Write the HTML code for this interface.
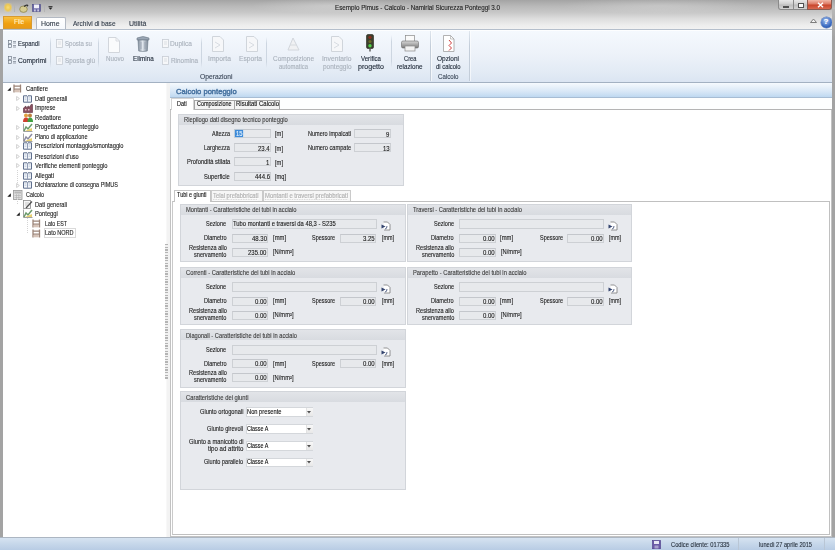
<!DOCTYPE html>
<html><head><meta charset="utf-8"><style>
html,body{margin:0;padding:0;width:835px;height:550px;overflow:hidden;background:#fff;font-family:"Liberation Sans", sans-serif;}
#w{position:absolute;left:0;top:0;width:835px;height:550px;overflow:hidden;}
.r{position:absolute;}
.t{position:absolute;white-space:nowrap;transform-origin:0 50%;-webkit-text-stroke:0.12px currentColor;}
</style></head><body><div id="w">
<div class="r" style="left:0px;top:0px;width:835px;height:29px;background:linear-gradient(#a4a4a4 0px,#b8b8b8 6px,#c9c9c9 13px,#dedede 19px,#ededed 25px,#f2f2f2 29px)"></div>
<div class="r" style="left:250px;top:0px;width:160px;height:14px;background:radial-gradient(ellipse at 50% 40%,rgba(255,255,255,0.25),rgba(255,255,255,0) 70%)"></div>
<div class="r" style="left:560px;top:0px;width:200px;height:14px;background:radial-gradient(ellipse at 50% 40%,rgba(255,255,255,0.2),rgba(255,255,255,0) 70%)"></div>
<div class="t" style="left:335.00px;top:3.80px;font-size:6.5px;line-height:7.80px;color:#1e1e1e;transform:scale(0.966,1);">Esempio Pimus - Calcolo - Namirial Sicurezza Ponteggi 3.0</div>
<div class="r" style="left:778px;top:0px;width:16px;height:10px;background:linear-gradient(#e8e8e8,#cfcfcf 45%,#bdbdbd 55%,#d4d4d4);border:1px solid #8a8a8a;border-top:none;box-sizing:border-box;border-radius:0 0 0 3px"></div>
<div class="r" style="left:793px;top:0px;width:15px;height:10px;background:linear-gradient(#e8e8e8,#cfcfcf 45%,#bdbdbd 55%,#d4d4d4);border:1px solid #8a8a8a;border-top:none;box-sizing:border-box"></div>
<div class="r" style="left:807px;top:0px;width:25px;height:10px;background:linear-gradient(#f0b8a8,#dc7a64 45%,#c8452c 55%,#d86a50);border:1px solid #8a5a50;border-top:none;box-sizing:border-box;border-radius:0 0 3px 0"></div>
<svg class="r" style="left:816.5px;top:2px" width="7" height="6" viewBox="0 0 7 6"><path d="M1 0.8 L6 5.2 M6 0.8 L1 5.2" stroke="#fff" stroke-width="1.4"/></svg>
<div class="r" style="left:782.5px;top:5.5px;width:6px;height:2px;background:#fff;border:0.6px solid #505050;box-sizing:border-box"></div>
<div class="r" style="left:797.5px;top:3px;width:6px;height:4.5px;border:1px solid #505050;background:#fafafa;box-sizing:border-box"></div>
<div class="r" style="left:3.5px;top:3px;width:8px;height:9px;background:radial-gradient(ellipse at 50% 50%,#f6dc78 0,#eec850 45%,rgba(240,210,120,0.25) 75%,rgba(240,210,120,0) 100%)"></div>
<div class="r" style="left:14px;top:5px;width:0.8px;height:7px;background:#b4b4b4"></div>
<svg class="r" style="left:18.5px;top:3.5px" width="10" height="9" viewBox="0 0 10 9"><ellipse cx="4.5" cy="5.2" rx="3.8" ry="3.2" fill="#d6cc90" stroke="#8c8450" stroke-width="0.8"/><path d="M5 2.5 Q7 0.5 9 1.5" fill="none" stroke="#303030" stroke-width="1.1"/><path d="M8 0.5 L9.5 1.8 L8 2.8 Z" fill="#303030"/></svg>
<svg class="r" style="left:32px;top:4px" width="9" height="8" viewBox="0 0 9 8"><rect x="0.5" y="0.5" width="8" height="7" fill="#6a68a6" stroke="#4c4a86" stroke-width="0.6"/><rect x="2" y="0.5" width="5" height="3.8" fill="#f0f0f8"/><rect x="2.2" y="5.4" width="1.4" height="2" fill="#e0e0ee"/><rect x="5.4" y="5.4" width="1.4" height="2" fill="#e0e0ee"/></svg>
<div class="r" style="left:44px;top:5px;width:0.8px;height:7px;background:#b4b4b4"></div>
<svg class="r" style="left:48px;top:5.5px" width="5" height="4" viewBox="0 0 5 4"><rect x="0.5" y="0" width="4" height="0.8" fill="#222"/><path d="M0.5 1.6 H4.5 L2.5 3.8 Z" fill="#222"/></svg>
<div class="r" style="left:3px;top:16px;width:29px;height:13px;background:linear-gradient(#f8c040,#f0a010 60%,#e89a18);border:1px solid #d89a30;box-sizing:border-box"></div>
<div class="t" style="left:14.00px;top:18.00px;font-size:7.0px;line-height:8.40px;color:#fff0c8;transform:scale(0.887,1);">File</div>
<div class="r" style="left:36px;top:16.5px;width:30px;height:13px;background:linear-gradient(#ffffff,#f5f8fc);border:1px solid #b3b9c3;border-bottom:none;box-sizing:border-box;border-radius:2px 2px 0 0"></div>
<div class="t" style="left:41.00px;top:19.80px;font-size:6.5px;line-height:7.80px;color:#353f4c;transform:scale(1.067,1);">Home</div>
<div class="t" style="left:73.00px;top:19.80px;font-size:6.5px;line-height:7.80px;color:#353f4c;transform:scale(1.006,1);">Archivi di base</div>
<div class="t" style="left:129.00px;top:19.80px;font-size:6.5px;line-height:7.80px;color:#353f4c;transform:scale(1.077,1);">Utilità</div>
<svg class="r" style="left:809px;top:17px" width="9" height="7" viewBox="0 0 9 7"><path d="M1.5 5.5 L4.5 2 L7.5 5.5 Z" fill="#f4f4f4" stroke="#707070" stroke-width="0.9"/></svg>
<div class="r" style="left:820.5px;top:16.5px;width:11px;height:11px;border-radius:50%;background:radial-gradient(circle at 45% 35%,#a8c4f0,#3a6ac0 60%,#2850a0);box-shadow:0 0 0 0.5px #5a7ab8"></div>
<div class="t" style="left:823.56px;top:16.90px;font-size:8px;line-height:9.60px;color:#fff;transform:scale(1.000,1);font-weight:bold;">?</div>
<div class="r" style="left:3px;top:29px;width:829px;height:54px;background:linear-gradient(#f5f9fe,#edf2f9 45%,#e3ebf5 80%,#dbe5f2);border-top:1px solid #b5bfcc;border-bottom:1px solid #a3b1c2;box-sizing:border-box"></div>
<div class="r" style="left:3px;top:30px;width:829px;height:1px;background:#fdfeff"></div>
<svg class="r" style="left:7.5px;top:39.5px" width="8" height="8" viewBox="0 0 8 8"><rect x="0.5" y="0.5" width="3" height="3" fill="none" stroke="#6a7482" stroke-width="0.65"/><rect x="0.5" y="4.5" width="3" height="3" fill="none" stroke="#6a7482" stroke-width="0.65"/><path d="M5 1.5 H8 M5 3 H8 M5 5.5 H8 M5 7 H8" stroke="#6a7482" stroke-width="0.65"/></svg>
<div class="t" style="left:17.50px;top:40.10px;font-size:7px;line-height:8.40px;color:#222c3a;transform:scale(0.850,1);">Espandi</div>
<svg class="r" style="left:7.5px;top:56px" width="8" height="8" viewBox="0 0 8 8"><rect x="0.5" y="0.5" width="3" height="3" fill="none" stroke="#6a7482" stroke-width="0.65"/><rect x="0.5" y="4.5" width="3" height="3" fill="none" stroke="#6a7482" stroke-width="0.65"/><path d="M5 1.5 H8 M5 3 H8 M5 5.5 H8 M5 7 H8" stroke="#6a7482" stroke-width="0.65"/></svg>
<div class="t" style="left:17.50px;top:56.90px;font-size:7px;line-height:8.40px;color:#222c3a;transform:scale(0.952,1);">Comprimi</div>
<div class="r" style="left:50px;top:37px;width:1px;height:31px;background:linear-gradient(rgba(200,210,222,0),#cdd6e1 20%,#cdd6e1 80%,rgba(200,210,222,0))"></div>
<svg class="r" style="left:55px;top:39px" width="8" height="9" viewBox="0 0 8 9"><rect x="1.5" y="0.5" width="6" height="8" fill="#f6f7f9" stroke="#c8cdd4" stroke-width="0.8"/><path d="M3 3 H6 M3 5 H6" stroke="#d0d4da" stroke-width="0.7"/></svg>
<div class="t" style="left:65.00px;top:40.10px;font-size:7px;line-height:8.40px;color:#a9b1bb;transform:scale(0.867,1);">Sposta su</div>
<svg class="r" style="left:55px;top:56px" width="8" height="9" viewBox="0 0 8 9"><rect x="1.5" y="0.5" width="6" height="8" fill="#f6f7f9" stroke="#c8cdd4" stroke-width="0.8"/><path d="M3 3 H6 M3 5 H6" stroke="#d0d4da" stroke-width="0.7"/></svg>
<div class="t" style="left:65.00px;top:56.90px;font-size:7px;line-height:8.40px;color:#a9b1bb;transform:scale(0.907,1);">Sposta giù</div>
<div class="r" style="left:98px;top:37px;width:1px;height:31px;background:linear-gradient(rgba(200,210,222,0),#cdd6e1 20%,#cdd6e1 80%,rgba(200,210,222,0))"></div>
<svg class="r" style="left:107px;top:37px" width="14" height="16" viewBox="0 0 14 16"><path d="M1.5 0.5 H9 L12.5 4 V15.5 H1.5 Z" fill="#fafbfc" stroke="#d2d6dc" stroke-width="1"/><path d="M9 0.5 V4 H12.5" fill="none" stroke="#d2d6dc" stroke-width="0.8"/></svg>
<div class="t" style="left:105.50px;top:55.10px;font-size:7px;line-height:8.40px;color:#a9b1bb;transform:scale(0.890,1);">Nuovo</div>
<svg class="r" style="left:136px;top:35px" width="14" height="17" viewBox="0 0 14 17"><path d="M1 3 Q7 0 13 3 V5 H1 Z" fill="#9aa6b4" stroke="#6c7886" stroke-width="0.6"/><path d="M2 5 H12 L11.3 16 Q7 17 2.7 16 Z" fill="url(#tg)" stroke="#6c7886" stroke-width="0.6"/><defs><linearGradient id="tg"><stop offset="0" stop-color="#7e8a98"/><stop offset="0.45" stop-color="#dfe5ec"/><stop offset="1" stop-color="#7a8694"/></linearGradient></defs><path d="M5 7 V14 M9 7 V14" stroke="#8a96a4" stroke-width="0.6"/></svg>
<div class="t" style="left:132.60px;top:55.10px;font-size:7px;line-height:8.40px;color:#222c3a;transform:scale(0.902,1);">Elimina</div>
<svg class="r" style="left:161px;top:39px" width="8" height="9" viewBox="0 0 8 9"><rect x="1.5" y="0.5" width="6" height="8" fill="#f6f7f9" stroke="#c8cdd4" stroke-width="0.8"/><path d="M3 3 H6 M3 5 H6" stroke="#d0d4da" stroke-width="0.7"/></svg>
<div class="t" style="left:170.00px;top:39.90px;font-size:7px;line-height:8.40px;color:#a9b1bb;transform:scale(0.942,1);">Duplica</div>
<svg class="r" style="left:161px;top:56px" width="8" height="9" viewBox="0 0 8 9"><rect x="1.5" y="0.5" width="6" height="8" fill="#f6f7f9" stroke="#c8cdd4" stroke-width="0.8"/><path d="M3 3 H6 M3 5 H6" stroke="#d0d4da" stroke-width="0.7"/></svg>
<div class="t" style="left:170.50px;top:56.90px;font-size:7px;line-height:8.40px;color:#a9b1bb;transform:scale(0.913,1);">Rinomina</div>
<div class="r" style="left:201px;top:37px;width:1px;height:31px;background:linear-gradient(rgba(200,210,222,0),#cdd6e1 20%,#cdd6e1 80%,rgba(200,210,222,0))"></div>
<svg class="r" style="left:211px;top:36px" width="14" height="16" viewBox="0 0 14 16"><path d="M1.5 0.5 H9 L12.5 4 V15.5 H1.5 Z" fill="#f6f7f9" stroke="#d0d5db" stroke-width="1"/><path d="M4 6 L9 9 L4 12" fill="none" stroke="#d8dce2" stroke-width="1"/></svg>
<div class="t" style="left:208.00px;top:55.10px;font-size:7px;line-height:8.40px;color:#a9b1bb;transform:scale(0.969,1);">Importa</div>
<svg class="r" style="left:245px;top:36px" width="14" height="16" viewBox="0 0 14 16"><path d="M1.5 0.5 H9 L12.5 4 V15.5 H1.5 Z" fill="#f6f7f9" stroke="#d0d5db" stroke-width="1"/><path d="M4 6 L9 9 L4 12" fill="none" stroke="#d8dce2" stroke-width="1"/></svg>
<div class="t" style="left:239.00px;top:55.10px;font-size:7px;line-height:8.40px;color:#a9b1bb;transform:scale(0.953,1);">Esporta</div>
<div class="r" style="left:266px;top:37px;width:1px;height:31px;background:linear-gradient(rgba(200,210,222,0),#cdd6e1 20%,#cdd6e1 80%,rgba(200,210,222,0))"></div>
<svg class="r" style="left:286px;top:36px" width="15" height="16" viewBox="0 0 15 16"><path d="M2 14 L7 2 L13 14 Z" fill="#f0f1f3" stroke="#d2d6dc" stroke-width="1"/><path d="M4 9 H11" stroke="#d6dade" stroke-width="1"/></svg>
<div class="t" style="left:273.00px;top:55.10px;font-size:7px;line-height:8.40px;color:#a9b1bb;transform:scale(0.924,1);">Composizione</div>
<div class="t" style="left:279.00px;top:62.90px;font-size:7px;line-height:8.40px;color:#a9b1bb;transform:scale(0.847,1);">automatica</div>
<svg class="r" style="left:330px;top:36px" width="14" height="16" viewBox="0 0 14 16"><path d="M1.5 0.5 H9 L12.5 4 V15.5 H1.5 Z" fill="#f6f7f9" stroke="#d0d5db" stroke-width="1"/><path d="M4 6 L9 9 L4 12" fill="none" stroke="#d8dce2" stroke-width="1"/></svg>
<div class="t" style="left:322.00px;top:55.10px;font-size:7px;line-height:8.40px;color:#a9b1bb;transform:scale(0.960,1);">Inventario</div>
<div class="t" style="left:323.00px;top:62.90px;font-size:7px;line-height:8.40px;color:#a9b1bb;transform:scale(0.927,1);">ponteggio</div>
<svg class="r" style="left:365px;top:34px" width="10" height="18" viewBox="0 0 10 18"><rect x="1.5" y="0.5" width="7" height="14" rx="1.5" fill="#3c3f2e" stroke="#23251a" stroke-width="0.6"/><circle cx="5" cy="3.3" r="1.6" fill="#8a3020"/><circle cx="5" cy="7.5" r="1.6" fill="#6a6a28"/><circle cx="5" cy="11.7" r="1.7" fill="#50d048"/><rect x="4.3" y="14.5" width="1.4" height="3" fill="#555"/></svg>
<div class="t" style="left:361.00px;top:55.10px;font-size:7px;line-height:8.40px;color:#222c3a;transform:scale(0.871,1);">Verifica</div>
<div class="t" style="left:358.00px;top:62.90px;font-size:7px;line-height:8.40px;color:#222c3a;transform:scale(1.012,1);">progetto</div>
<div class="r" style="left:391px;top:35px;width:1px;height:33px;background:linear-gradient(rgba(200,210,222,0),#cdd6e1 20%,#cdd6e1 80%,rgba(200,210,222,0))"></div>
<svg class="r" style="left:401px;top:35px" width="18" height="17" viewBox="0 0 18 17"><rect x="4.5" y="0.5" width="9" height="6" fill="#fafafa" stroke="#8a8a8a" stroke-width="0.7"/><rect x="0.5" y="6" width="17" height="7" rx="1.5" fill="url(#pg)" stroke="#6a6a6a" stroke-width="0.6"/><defs><linearGradient id="pg" x1="0" y1="0" x2="0" y2="1"><stop offset="0" stop-color="#d8d8d8"/><stop offset="1" stop-color="#7a7a7a"/></linearGradient></defs><rect x="4" y="11" width="10" height="5" fill="#f2f2f2" stroke="#8a8a8a" stroke-width="0.7"/></svg>
<div class="t" style="left:404.00px;top:55.10px;font-size:7px;line-height:8.40px;color:#222c3a;transform:scale(0.824,1);">Crea</div>
<div class="t" style="left:397.00px;top:62.90px;font-size:7px;line-height:8.40px;color:#222c3a;transform:scale(0.898,1);">relazione</div>
<div class="t" style="left:200.00px;top:72.90px;font-size:7px;line-height:8.40px;color:#3b4758;transform:scale(0.960,1);">Operazioni</div>
<div class="r" style="left:430px;top:31px;width:1px;height:50px;background:linear-gradient(#dfe6ee,#c3cdd9 30%,#c3cdd9)"></div>
<div class="r" style="left:431px;top:31px;width:1px;height:50px;background:rgba(255,255,255,0.6)"></div>
<svg class="r" style="left:442px;top:35px" width="13" height="17" viewBox="0 0 13 17"><path d="M1.5 0.5 H8.5 L12 4 V16.5 H1.5 Z" fill="#fff" stroke="#a0a0a0" stroke-width="0.8"/><path d="M8.5 0.5 V4 H12" fill="none" stroke="#a0a0a0" stroke-width="0.6"/><path d="M7 5 L9.5 8 L7 10.5 L9.5 13 L7 15.5" fill="none" stroke="#d04040" stroke-width="1"/></svg>
<div class="t" style="left:437.00px;top:55.10px;font-size:7px;line-height:8.40px;color:#222c3a;transform:scale(0.927,1);">Opzioni</div>
<div class="t" style="left:436.00px;top:62.90px;font-size:7px;line-height:8.40px;color:#222c3a;transform:scale(0.840,1);">di calcolo</div>
<div class="t" style="left:438.00px;top:72.90px;font-size:7px;line-height:8.40px;color:#3b4758;transform:scale(0.878,1);">Calcolo</div>
<div class="r" style="left:469px;top:31px;width:1px;height:50px;background:linear-gradient(#dfe6ee,#c3cdd9 30%,#c3cdd9)"></div>
<div class="r" style="left:470px;top:31px;width:1px;height:50px;background:rgba(255,255,255,0.6)"></div>
<div class="r" style="left:0px;top:29px;width:2.5px;height:508px;background:#a3a3a3"></div>
<div class="r" style="left:832px;top:9px;width:3px;height:528px;background:linear-gradient(#b8b8b8,#a3a3a3 30px)"></div>
<div class="r" style="left:3px;top:83px;width:829px;height:453px;background:#fff"></div>
<div class="r" style="left:165.5px;top:83px;width:4px;height:454px;background:#f3f3f3"></div>
<div class="r" style="left:165.5px;top:83px;width:0.7px;height:454px;background:#f8f8f8"></div>
<div class="r" style="left:165.3px;top:244px;width:3.2px;height:135px;background:repeating-linear-gradient(#b4b4b4 0 0.8px,#f0f0f0 0.8px 1.6px)"></div>
<svg class="r" style="left:6.5px;top:87.3px" width="4" height="4" viewBox="0 0 4 4"><path d="M3.8 0.3 V3.8 H0.3 Z" fill="#1a1a1a"/></svg>
<svg class="r" style="left:13.3px;top:84.3px" width="9" height="9" viewBox="0 0 9 9"><path d="M1 0.5 V8.5 M7.5 0.5 V8.5 M1 2.2 H7.5 M1 5.2 H7.5" stroke="#9c8478" stroke-width="1.3" fill="none"/><rect x="1.8" y="5.9" width="5" height="2.4" fill="#d8c4b8"/></svg>
<div class="t" style="left:25.50px;top:85.00px;font-size:7.0px;line-height:8.40px;color:#1c1c1c;transform:scale(0.832,1);">Cantiere</div>
<svg class="r" style="left:16.400000000000002px;top:96.0px" width="4" height="5" viewBox="0 0 4 5"><path d="M0.6 0.5 L3.4 2.5 L0.6 4.5 Z" fill="#fff" stroke="#c0c0c0" stroke-width="0.7"/></svg>
<svg class="r" style="left:23.1px;top:94.5px" width="9" height="8" viewBox="0 0 9 8"><path d="M0.5 0.8 H4 L4.5 1.3 L5 0.8 H8.5 V7.2 H5 L4.5 7.7 L4 7.2 H0.5 Z" fill="#f2f5fa" stroke="#60708e" stroke-width="1"/><path d="M4.5 1.3 V7.2" stroke="#7888a6" stroke-width="0.8"/><path d="M1.6 2.8 H3.4 M1.6 4.3 H3.4 M5.6 2.8 H7.4 M5.6 4.3 H7.4" stroke="#aab8cc" stroke-width="0.6"/></svg>
<div class="t" style="left:35.00px;top:94.70px;font-size:7.0px;line-height:8.40px;color:#1c1c1c;transform:scale(0.824,1);">Dati generali</div>
<svg class="r" style="left:16.400000000000002px;top:105.5px" width="4" height="5" viewBox="0 0 4 5"><path d="M0.6 0.5 L3.4 2.5 L0.6 4.5 Z" fill="#fff" stroke="#c0c0c0" stroke-width="0.7"/></svg>
<svg class="r" style="left:22.8px;top:103.5px" width="10" height="9" viewBox="0 0 10 9"><path d="M0.5 8.5 V4 L3 2 V4 L5.5 2 V4 L8 1 V0.5 H9.5 V8.5 Z" fill="#8a5060" stroke="#5a3040" stroke-width="0.6"/><rect x="2" y="5" width="1.5" height="1.5" fill="#e0c0c8"/><rect x="5" y="5" width="1.5" height="1.5" fill="#e0c0c8"/></svg>
<div class="t" style="left:35.00px;top:104.20px;font-size:7.0px;line-height:8.40px;color:#1c1c1c;transform:scale(0.811,1);">Imprese</div>
<svg class="r" style="left:22.8px;top:113.0px" width="10" height="9" viewBox="0 0 10 9"><circle cx="3" cy="2.5" r="2" fill="#e0a040"/><circle cx="7" cy="2.5" r="2" fill="#c08040"/><path d="M0 9 Q0 4.5 3 4.5 Q6 4.5 6 9 Z" fill="#d04030"/><path d="M4.5 9 Q4.5 4.5 7 4.5 Q10 4.5 10 9 Z" fill="#40a040"/></svg>
<div class="t" style="left:35.00px;top:113.70px;font-size:7.0px;line-height:8.40px;color:#1c1c1c;transform:scale(0.846,1);">Redattore</div>
<svg class="r" style="left:16.400000000000002px;top:124.5px" width="4" height="5" viewBox="0 0 4 5"><path d="M0.6 0.5 L3.4 2.5 L0.6 4.5 Z" fill="#fff" stroke="#c0c0c0" stroke-width="0.7"/></svg>
<svg class="r" style="left:22.8px;top:122.5px" width="10" height="9" viewBox="0 0 10 9"><path d="M0.5 0.5 V8.5 H9.5" fill="none" stroke="#8a8a8a" stroke-width="0.8"/><path d="M1 8 L3 4 L5 6 L9 1" fill="none" stroke="#6a9a6a" stroke-width="1.5"/><path d="M2 8 L9 5 V8 Z" fill="#e8d070"/></svg>
<div class="t" style="left:35.00px;top:123.20px;font-size:7.0px;line-height:8.40px;color:#1c1c1c;transform:scale(0.837,1);">Progettazione ponteggio</div>
<svg class="r" style="left:16.400000000000002px;top:134.5px" width="4" height="5" viewBox="0 0 4 5"><path d="M0.6 0.5 L3.4 2.5 L0.6 4.5 Z" fill="#fff" stroke="#c0c0c0" stroke-width="0.7"/></svg>
<svg class="r" style="left:22.8px;top:132.5px" width="10" height="9" viewBox="0 0 10 9"><path d="M0.5 0.5 V8.5 H9.5" fill="none" stroke="#8a8a8a" stroke-width="0.8"/><path d="M1 8 L3 4 L5 6 L9 1" fill="none" stroke="#8a8aa0" stroke-width="1.5"/><path d="M2 8 L9 5 V8 Z" fill="#e8d070"/></svg>
<div class="t" style="left:35.00px;top:133.20px;font-size:7.0px;line-height:8.40px;color:#1c1c1c;transform:scale(0.794,1);">Piano di applicazione</div>
<svg class="r" style="left:16.400000000000002px;top:143.7px" width="4" height="5" viewBox="0 0 4 5"><path d="M0.6 0.5 L3.4 2.5 L0.6 4.5 Z" fill="#fff" stroke="#c0c0c0" stroke-width="0.7"/></svg>
<svg class="r" style="left:23.1px;top:142.2px" width="9" height="8" viewBox="0 0 9 8"><path d="M0.5 0.8 H4 L4.5 1.3 L5 0.8 H8.5 V7.2 H5 L4.5 7.7 L4 7.2 H0.5 Z" fill="#f2f5fa" stroke="#60708e" stroke-width="1"/><path d="M4.5 1.3 V7.2" stroke="#7888a6" stroke-width="0.8"/><path d="M1.6 2.8 H3.4 M1.6 4.3 H3.4 M5.6 2.8 H7.4 M5.6 4.3 H7.4" stroke="#aab8cc" stroke-width="0.6"/></svg>
<div class="t" style="left:35.00px;top:142.40px;font-size:7.0px;line-height:8.40px;color:#1c1c1c;transform:scale(0.812,1);">Prescrizioni montaggio/smontaggio</div>
<svg class="r" style="left:16.400000000000002px;top:153.8px" width="4" height="5" viewBox="0 0 4 5"><path d="M0.6 0.5 L3.4 2.5 L0.6 4.5 Z" fill="#fff" stroke="#c0c0c0" stroke-width="0.7"/></svg>
<svg class="r" style="left:23.1px;top:152.3px" width="9" height="8" viewBox="0 0 9 8"><path d="M0.5 0.8 H4 L4.5 1.3 L5 0.8 H8.5 V7.2 H5 L4.5 7.7 L4 7.2 H0.5 Z" fill="#f2f5fa" stroke="#60708e" stroke-width="1"/><path d="M4.5 1.3 V7.2" stroke="#7888a6" stroke-width="0.8"/><path d="M1.6 2.8 H3.4 M1.6 4.3 H3.4 M5.6 2.8 H7.4 M5.6 4.3 H7.4" stroke="#aab8cc" stroke-width="0.6"/></svg>
<div class="t" style="left:35.00px;top:152.50px;font-size:7.0px;line-height:8.40px;color:#1c1c1c;transform:scale(0.800,1);">Prescrizioni d'uso</div>
<svg class="r" style="left:16.400000000000002px;top:163.1px" width="4" height="5" viewBox="0 0 4 5"><path d="M0.6 0.5 L3.4 2.5 L0.6 4.5 Z" fill="#fff" stroke="#c0c0c0" stroke-width="0.7"/></svg>
<svg class="r" style="left:23.1px;top:161.6px" width="9" height="8" viewBox="0 0 9 8"><path d="M0.5 0.8 H4 L4.5 1.3 L5 0.8 H8.5 V7.2 H5 L4.5 7.7 L4 7.2 H0.5 Z" fill="#f2f5fa" stroke="#60708e" stroke-width="1"/><path d="M4.5 1.3 V7.2" stroke="#7888a6" stroke-width="0.8"/><path d="M1.6 2.8 H3.4 M1.6 4.3 H3.4 M5.6 2.8 H7.4 M5.6 4.3 H7.4" stroke="#aab8cc" stroke-width="0.6"/></svg>
<div class="t" style="left:35.00px;top:161.80px;font-size:7.0px;line-height:8.40px;color:#1c1c1c;transform:scale(0.824,1);">Verifiche elementi ponteggio</div>
<svg class="r" style="left:23.1px;top:171.5px" width="9" height="8" viewBox="0 0 9 8"><path d="M0.5 0.8 H4 L4.5 1.3 L5 0.8 H8.5 V7.2 H5 L4.5 7.7 L4 7.2 H0.5 Z" fill="#f2f5fa" stroke="#60708e" stroke-width="1"/><path d="M4.5 1.3 V7.2" stroke="#7888a6" stroke-width="0.8"/><path d="M1.6 2.8 H3.4 M1.6 4.3 H3.4 M5.6 2.8 H7.4 M5.6 4.3 H7.4" stroke="#aab8cc" stroke-width="0.6"/></svg>
<div class="t" style="left:35.00px;top:171.70px;font-size:7.0px;line-height:8.40px;color:#1c1c1c;transform:scale(0.828,1);">Allegati</div>
<svg class="r" style="left:16.400000000000002px;top:182.5px" width="4" height="5" viewBox="0 0 4 5"><path d="M0.6 0.5 L3.4 2.5 L0.6 4.5 Z" fill="#fff" stroke="#c0c0c0" stroke-width="0.7"/></svg>
<svg class="r" style="left:23.1px;top:181.0px" width="9" height="8" viewBox="0 0 9 8"><path d="M0.5 0.8 H4 L4.5 1.3 L5 0.8 H8.5 V7.2 H5 L4.5 7.7 L4 7.2 H0.5 Z" fill="#f2f5fa" stroke="#60708e" stroke-width="1"/><path d="M4.5 1.3 V7.2" stroke="#7888a6" stroke-width="0.8"/><path d="M1.6 2.8 H3.4 M1.6 4.3 H3.4 M5.6 2.8 H7.4 M5.6 4.3 H7.4" stroke="#aab8cc" stroke-width="0.6"/></svg>
<div class="t" style="left:35.00px;top:181.20px;font-size:7.0px;line-height:8.40px;color:#1c1c1c;transform:scale(0.781,1);">Dichiarazione di consegna PIMUS</div>
<svg class="r" style="left:6.5px;top:193.3px" width="4" height="4" viewBox="0 0 4 4"><path d="M3.8 0.3 V3.8 H0.3 Z" fill="#1a1a1a"/></svg>
<svg class="r" style="left:13.3px;top:190.3px" width="10" height="10" viewBox="0 0 10 10"><rect x="0.5" y="0.5" width="8.5" height="9" fill="#e0e0e0" stroke="#9a9a9a" stroke-width="0.8"/><rect x="1.5" y="1.5" width="6.5" height="2" fill="#b8b8b8"/><path d="M1.5 5.5 H8 M1.5 7.5 H8 M3.5 4 V9 M5.8 4 V9" stroke="#b0b0b0" stroke-width="0.6"/></svg>
<div class="t" style="left:25.50px;top:191.00px;font-size:7.0px;line-height:8.40px;color:#1c1c1c;transform:scale(0.775,1);">Calcolo</div>
<svg class="r" style="left:22.8px;top:200.0px" width="10" height="9" viewBox="0 0 10 9"><rect x="0.5" y="0.5" width="7" height="8" fill="#f8f8f8" stroke="#8a8a8a" stroke-width="0.8"/><path d="M2 3 H6 M2 5 H5" stroke="#aaa" stroke-width="0.6"/><path d="M3 8 L9 1.5" stroke="#505050" stroke-width="1.2"/></svg>
<div class="t" style="left:35.00px;top:200.70px;font-size:7.0px;line-height:8.40px;color:#1c1c1c;transform:scale(0.814,1);">Dati generali</div>
<svg class="r" style="left:16.1px;top:212.2px" width="4" height="4" viewBox="0 0 4 4"><path d="M3.8 0.3 V3.8 H0.3 Z" fill="#1a1a1a"/></svg>
<svg class="r" style="left:22.8px;top:209.2px" width="10" height="9" viewBox="0 0 10 9"><path d="M0.5 0.5 V8.5 H9.5" fill="none" stroke="#8a8a8a" stroke-width="0.8"/><path d="M1 8 L3 4 L5 6 L9 1" fill="none" stroke="#6a9a6a" stroke-width="1.5"/><path d="M2 8 L9 5 V8 Z" fill="#e8d070"/></svg>
<div class="t" style="left:35.00px;top:209.90px;font-size:7.0px;line-height:8.40px;color:#1c1c1c;transform:scale(0.825,1);">Ponteggi</div>
<svg class="r" style="left:32.3px;top:219.0px" width="9" height="9" viewBox="0 0 9 9"><path d="M1 0.5 V8.5 M7.5 0.5 V8.5 M1 2.2 H7.5 M1 5.2 H7.5" stroke="#9c8478" stroke-width="1.3" fill="none"/><rect x="1.8" y="5.9" width="5" height="2.4" fill="#d8c4b8"/></svg>
<div class="t" style="left:44.50px;top:219.70px;font-size:7.0px;line-height:8.40px;color:#1c1c1c;transform:scale(0.754,1);">Lato EST</div>
<svg class="r" style="left:32.3px;top:228.5px" width="9" height="9" viewBox="0 0 9 9"><path d="M1 0.5 V8.5 M7.5 0.5 V8.5 M1 2.2 H7.5 M1 5.2 H7.5" stroke="#9c8478" stroke-width="1.3" fill="none"/><rect x="1.8" y="5.9" width="5" height="2.4" fill="#d8c4b8"/></svg>
<div class="t" style="left:44.50px;top:229.20px;font-size:7.0px;line-height:8.40px;color:#1c1c1c;transform:scale(0.788,1);">Lato NORD</div>
<div class="r" style="left:17px;top:170px;width:1px;height:15px;background:repeating-linear-gradient(#d4d4d4 0 1px,transparent 1px 2px)"></div>
<div class="r" style="left:17px;top:199px;width:1px;height:6px;background:repeating-linear-gradient(#d4d4d4 0 1px,transparent 1px 2px)"></div>
<div class="r" style="left:27px;top:218px;width:1px;height:15px;background:repeating-linear-gradient(#d4d4d4 0 1px,transparent 1px 2px)"></div>
<div class="r" style="left:43.5px;top:228px;width:32px;height:10px;border:1px solid #dadada;box-sizing:border-box"></div>
<div class="r" style="left:170px;top:83px;width:662px;height:14.5px;background:linear-gradient(#f6fafe 0px,#e8f1fa 4px,#d6e6f6 9px,#bcd7f0 14.5px)"></div>
<div class="r" style="left:170px;top:97px;width:662px;height:1px;background:#a7bdd4"></div>
<div class="t" style="left:176.20px;top:87.14px;font-size:7.6px;line-height:9.12px;color:#4672a0;transform:scale(0.999,1);-webkit-text-stroke:0.45px #4672a0;">Calcolo ponteggio</div>
<div class="r" style="left:170px;top:98px;width:662px;height:11px;background:#fdfefe"></div>
<div class="r" style="left:194px;top:100px;width:40.5px;height:9px;background:#f4f4f4;border:1px solid #a4a4a4;border-bottom:none;box-sizing:border-box"></div>
<div class="r" style="left:233.5px;top:100px;width:46.5px;height:9px;background:#f4f4f4;border:1px solid #a4a4a4;border-bottom:none;box-sizing:border-box"></div>
<div class="r" style="left:169.5px;top:108.5px;width:662.5px;height:428.5px;border:1px solid #c2c2c2;box-sizing:border-box;background:#fff"></div>
<div class="r" style="left:169.5px;top:108.5px;width:662.5px;height:1px;background:#b4b4b4"></div>
<div class="r" style="left:170.5px;top:98px;width:23.5px;height:11.5px;background:#fff;border:1px solid #d4d4d4;border-bottom:none;box-sizing:border-box"></div>
<div class="t" style="left:176.80px;top:99.70px;font-size:7.0px;line-height:8.40px;color:#111;transform:scale(0.779,1);">Dati</div>
<div class="t" style="left:196.50px;top:100.00px;font-size:7.0px;line-height:8.40px;color:#111;transform:scale(0.778,1);">Composizione</div>
<div class="t" style="left:236.00px;top:100.00px;font-size:7.0px;line-height:8.40px;color:#111;transform:scale(0.857,1);">Risultati Calcolo</div>
<div class="r" style="left:178px;top:114px;width:226px;height:72px;background:#e8eaee;border:1px solid #d2d5da;box-sizing:border-box"></div>
<div class="r" style="left:179px;top:115px;width:224px;height:10px;background:linear-gradient(#e2e4e8,#d8dbe0)"></div>
<div class="t" style="left:184.00px;top:116.30px;font-size:7.0px;line-height:8.40px;color:#3c3c3c;transform:scale(0.825,1);">Riepilogo dati disegno tecnico ponteggio</div>
<div class="t" style="left:212.00px;top:129.90px;font-size:7.0px;line-height:8.40px;color:#1c1c1c;transform:scale(0.784,1);">Altezza</div>
<div class="r" style="left:234px;top:129.0px;width:37px;height:9px;background:#e7e9ec;border:1px solid #cdd0d4;border-top-color:#c4c7cc;box-sizing:border-box"></div>
<div class="t" style="left:275.00px;top:130.30px;font-size:7.0px;line-height:8.40px;color:#1c1c1c;transform:scale(0.823,1);">[m]</div>
<div class="t" style="left:204.30px;top:144.10px;font-size:7.0px;line-height:8.40px;color:#1c1c1c;transform:scale(0.786,1);">Larghezza</div>
<div class="r" style="left:234px;top:143.2px;width:37px;height:9px;background:#e7e9ec;border:1px solid #cdd0d4;border-top-color:#c4c7cc;box-sizing:border-box"></div>
<div class="t" style="left:258.12px;top:145.00px;font-size:7.0px;line-height:8.40px;color:#1a1a1a;transform:scale(0.857,1);">23.4</div>
<div class="t" style="left:275.00px;top:144.50px;font-size:7.0px;line-height:8.40px;color:#1c1c1c;transform:scale(0.823,1);">[m]</div>
<div class="t" style="left:186.70px;top:158.30px;font-size:7.0px;line-height:8.40px;color:#1c1c1c;transform:scale(0.830,1);">Profondità stilata</div>
<div class="r" style="left:234px;top:157.4px;width:37px;height:9px;background:#e7e9ec;border:1px solid #cdd0d4;border-top-color:#c4c7cc;box-sizing:border-box"></div>
<div class="t" style="left:266.46px;top:159.20px;font-size:7.0px;line-height:8.40px;color:#1a1a1a;transform:scale(0.857,1);">1</div>
<div class="t" style="left:275.00px;top:158.70px;font-size:7.0px;line-height:8.40px;color:#1c1c1c;transform:scale(0.823,1);">[m]</div>
<div class="t" style="left:204.30px;top:172.50px;font-size:7.0px;line-height:8.40px;color:#1c1c1c;transform:scale(0.826,1);">Superficie</div>
<div class="r" style="left:234px;top:171.6px;width:37px;height:9px;background:#e7e9ec;border:1px solid #cdd0d4;border-top-color:#c4c7cc;box-sizing:border-box"></div>
<div class="t" style="left:254.79px;top:173.40px;font-size:7.0px;line-height:8.40px;color:#1a1a1a;transform:scale(0.857,1);">444.6</div>
<div class="t" style="left:275.00px;top:172.90px;font-size:7.0px;line-height:8.40px;color:#1c1c1c;transform:scale(0.808,1);">[mq]</div>
<div class="r" style="left:234.8px;top:130.2px;width:8px;height:6.8px;background:#3c8ad8;box-shadow:0 0 1.5px #8cc0f0"></div>
<div class="t" style="left:235.50px;top:129.50px;font-size:7.0px;line-height:8.40px;color:#e8f4ff;transform:scale(0.835,1);">15</div>
<div class="t" style="left:307.70px;top:130.40px;font-size:7.0px;line-height:8.40px;color:#1c1c1c;transform:scale(0.791,1);">Numero impalcati</div>
<div class="r" style="left:354px;top:129px;width:37px;height:9px;background:#e7e9ec;border:1px solid #cdd0d4;border-top-color:#c4c7cc;box-sizing:border-box"></div>
<div class="t" style="left:386.46px;top:130.80px;font-size:7.0px;line-height:8.40px;color:#1a1a1a;transform:scale(0.857,1);">9</div>
<div class="t" style="left:307.70px;top:144.30px;font-size:7.0px;line-height:8.40px;color:#1c1c1c;transform:scale(0.803,1);">Numero campate</div>
<div class="r" style="left:354px;top:143px;width:37px;height:9px;background:#e7e9ec;border:1px solid #cdd0d4;border-top-color:#c4c7cc;box-sizing:border-box"></div>
<div class="t" style="left:383.13px;top:144.80px;font-size:7.0px;line-height:8.40px;color:#1a1a1a;transform:scale(0.857,1);">13</div>
<div class="r" style="left:210.5px;top:190px;width:52px;height:10.5px;background:#f6f6f6;border:1px solid #cacaca;border-bottom:none;box-sizing:border-box"></div>
<div class="r" style="left:262.5px;top:190px;width:88px;height:10.5px;background:#f6f6f6;border:1px solid #cacaca;border-bottom:none;box-sizing:border-box"></div>
<div class="r" style="left:172px;top:200.5px;width:658px;height:334.5px;border:1px solid #c0c0c0;border-left-color:#cacaca;box-sizing:border-box"></div>
<div class="r" style="left:173.5px;top:189.5px;width:37px;height:12px;background:#fff;border:1px solid #c4c4c4;border-bottom:none;box-sizing:border-box"></div>
<div class="t" style="left:176.50px;top:191.20px;font-size:7.0px;line-height:8.40px;color:#111;transform:scale(0.779,1);">Tubi e giunti</div>
<div class="t" style="left:213.00px;top:191.50px;font-size:7.0px;line-height:8.40px;color:#b4b4b4;transform:scale(0.829,1);text-shadow:0.7px 0.7px 0 #fff;text-decoration:underline dotted #d0d0d0;">Telai prefabbricati</div>
<div class="t" style="left:265.00px;top:191.50px;font-size:7.0px;line-height:8.40px;color:#b4b4b4;transform:scale(0.847,1);text-shadow:0.7px 0.7px 0 #fff;text-decoration:underline dotted #d0d0d0;">Montanti e traversi prefabbricati</div>
<div class="r" style="left:179.5px;top:203.7px;width:226px;height:58.5px;background:#e8eaee;border:1px solid #d2d5da;box-sizing:border-box"></div>
<div class="r" style="left:180.5px;top:204.7px;width:224px;height:10px;background:linear-gradient(#e2e4e8,#d8dbe0)"></div>
<div class="t" style="left:185.50px;top:206.00px;font-size:7.0px;line-height:8.40px;color:#3c3c3c;transform:scale(0.826,1);">Montanti - Caratteristiche dei tubi in acciaio</div>
<div class="t" style="left:206.34px;top:220.20px;font-size:7.0px;line-height:8.40px;color:#1c1c1c;transform:scale(0.797,1);">Sezione</div>
<div class="r" style="left:231.5px;top:219.0px;width:145px;height:10.2px;background:#e7e9ec;border:1px solid #cdd0d4;box-sizing:border-box"></div>
<div class="t" style="left:233.10px;top:219.90px;font-size:7.0px;line-height:8.40px;color:#1a1a1a;transform:scale(0.834,1);">Tubo montanti e traversi da 48,3 - S235</div>
<svg class="r" style="left:380.5px;top:221.2px" width="10" height="10" viewBox="0 0 10 10"><path d="M2.5 1 H6.5 L9 3.5 V9 H3" fill="#fff" stroke="#7a7a7a" stroke-width="0.8"/><path d="M0.5 3.5 L4.5 5.5 L0.5 7.5 Z" fill="#34446e"/><path d="M6 5 Q6 8 4 8" fill="none" stroke="#34446e" stroke-width="0.8"/></svg>
<div class="t" style="left:203.87px;top:234.00px;font-size:7.0px;line-height:8.40px;color:#1c1c1c;transform:scale(0.797,1);">Diametro</div>
<div class="r" style="left:231.5px;top:233.7px;width:36.5px;height:9px;background:#e7e9ec;border:1px solid #cdd0d4;border-top-color:#c4c7cc;box-sizing:border-box"></div>
<div class="t" style="left:251.79px;top:234.70px;font-size:7.0px;line-height:8.40px;color:#1a1a1a;transform:scale(0.857,1);">48.30</div>
<div class="t" style="left:272.50px;top:234.40px;font-size:7.0px;line-height:8.40px;color:#1c1c1c;transform:scale(0.836,1);">[mm]</div>
<div class="t" style="left:312.23px;top:234.00px;font-size:7.0px;line-height:8.40px;color:#1c1c1c;transform:scale(0.780,1);">Spessore</div>
<div class="r" style="left:339.5px;top:233.7px;width:36.5px;height:9px;background:#e7e9ec;border:1px solid #cdd0d4;border-top-color:#c4c7cc;box-sizing:border-box"></div>
<div class="t" style="left:363.12px;top:234.70px;font-size:7.0px;line-height:8.40px;color:#1a1a1a;transform:scale(0.857,1);">3.25</div>
<div class="t" style="left:381.50px;top:234.40px;font-size:7.0px;line-height:8.40px;color:#1c1c1c;transform:scale(0.772,1);">[mm]</div>
<div class="t" style="left:188.66px;top:243.80px;font-size:7.0px;line-height:8.40px;color:#1c1c1c;transform:scale(0.797,1);">Resistenza allo</div>
<div class="t" style="left:194.25px;top:250.80px;font-size:7.0px;line-height:8.40px;color:#1c1c1c;transform:scale(0.797,1);">snervamento</div>
<div class="r" style="left:231.5px;top:247.5px;width:36.5px;height:9px;background:#e7e9ec;border:1px solid #cdd0d4;border-top-color:#c4c7cc;box-sizing:border-box"></div>
<div class="t" style="left:248.45px;top:248.50px;font-size:7.0px;line-height:8.40px;color:#1a1a1a;transform:scale(0.857,1);">235.00</div>
<div class="t" style="left:273.00px;top:248.20px;font-size:7.0px;line-height:8.40px;color:#1c1c1c;transform:scale(0.824,1);">[N/mm²]</div>
<div class="r" style="left:407px;top:203.7px;width:225px;height:58.5px;background:#e8eaee;border:1px solid #d2d5da;box-sizing:border-box"></div>
<div class="r" style="left:408px;top:204.7px;width:223px;height:10px;background:linear-gradient(#e2e4e8,#d8dbe0)"></div>
<div class="t" style="left:413.00px;top:206.00px;font-size:7.0px;line-height:8.40px;color:#3c3c3c;transform:scale(0.826,1);">Traversi - Caratteristiche dei tubi in acciaio</div>
<div class="t" style="left:433.84px;top:220.20px;font-size:7.0px;line-height:8.40px;color:#1c1c1c;transform:scale(0.797,1);">Sezione</div>
<div class="r" style="left:459px;top:219.0px;width:145px;height:10.2px;background:#e7e9ec;border:1px solid #cdd0d4;box-sizing:border-box"></div>
<svg class="r" style="left:608px;top:221.2px" width="10" height="10" viewBox="0 0 10 10"><path d="M2.5 1 H6.5 L9 3.5 V9 H3" fill="#fff" stroke="#7a7a7a" stroke-width="0.8"/><path d="M0.5 3.5 L4.5 5.5 L0.5 7.5 Z" fill="#34446e"/><path d="M6 5 Q6 8 4 8" fill="none" stroke="#34446e" stroke-width="0.8"/></svg>
<div class="t" style="left:431.37px;top:234.00px;font-size:7.0px;line-height:8.40px;color:#1c1c1c;transform:scale(0.797,1);">Diametro</div>
<div class="r" style="left:459px;top:233.7px;width:36.5px;height:9px;background:#e7e9ec;border:1px solid #cdd0d4;border-top-color:#c4c7cc;box-sizing:border-box"></div>
<div class="t" style="left:482.62px;top:234.70px;font-size:7.0px;line-height:8.40px;color:#1a1a1a;transform:scale(0.857,1);">0.00</div>
<div class="t" style="left:500.00px;top:234.40px;font-size:7.0px;line-height:8.40px;color:#1c1c1c;transform:scale(0.836,1);">[mm]</div>
<div class="t" style="left:539.73px;top:234.00px;font-size:7.0px;line-height:8.40px;color:#1c1c1c;transform:scale(0.780,1);">Spessore</div>
<div class="r" style="left:567px;top:233.7px;width:36.5px;height:9px;background:#e7e9ec;border:1px solid #cdd0d4;border-top-color:#c4c7cc;box-sizing:border-box"></div>
<div class="t" style="left:590.62px;top:234.70px;font-size:7.0px;line-height:8.40px;color:#1a1a1a;transform:scale(0.857,1);">0.00</div>
<div class="t" style="left:609.00px;top:234.40px;font-size:7.0px;line-height:8.40px;color:#1c1c1c;transform:scale(0.772,1);">[mm]</div>
<div class="t" style="left:416.16px;top:243.80px;font-size:7.0px;line-height:8.40px;color:#1c1c1c;transform:scale(0.797,1);">Resistenza allo</div>
<div class="t" style="left:421.75px;top:250.80px;font-size:7.0px;line-height:8.40px;color:#1c1c1c;transform:scale(0.797,1);">snervamento</div>
<div class="r" style="left:459px;top:247.5px;width:36.5px;height:9px;background:#e7e9ec;border:1px solid #cdd0d4;border-top-color:#c4c7cc;box-sizing:border-box"></div>
<div class="t" style="left:482.62px;top:248.50px;font-size:7.0px;line-height:8.40px;color:#1a1a1a;transform:scale(0.857,1);">0.00</div>
<div class="t" style="left:500.50px;top:248.20px;font-size:7.0px;line-height:8.40px;color:#1c1c1c;transform:scale(0.824,1);">[N/mm²]</div>
<div class="r" style="left:179.5px;top:266.7px;width:226px;height:58.5px;background:#e8eaee;border:1px solid #d2d5da;box-sizing:border-box"></div>
<div class="r" style="left:180.5px;top:267.7px;width:224px;height:10px;background:linear-gradient(#e2e4e8,#d8dbe0)"></div>
<div class="t" style="left:185.50px;top:269.00px;font-size:7.0px;line-height:8.40px;color:#3c3c3c;transform:scale(0.829,1);">Correnti - Caratteristiche dei tubi in acciaio</div>
<div class="t" style="left:206.34px;top:283.20px;font-size:7.0px;line-height:8.40px;color:#1c1c1c;transform:scale(0.797,1);">Sezione</div>
<div class="r" style="left:231.5px;top:282.0px;width:145px;height:10.2px;background:#e7e9ec;border:1px solid #cdd0d4;box-sizing:border-box"></div>
<svg class="r" style="left:380.5px;top:284.2px" width="10" height="10" viewBox="0 0 10 10"><path d="M2.5 1 H6.5 L9 3.5 V9 H3" fill="#fff" stroke="#7a7a7a" stroke-width="0.8"/><path d="M0.5 3.5 L4.5 5.5 L0.5 7.5 Z" fill="#34446e"/><path d="M6 5 Q6 8 4 8" fill="none" stroke="#34446e" stroke-width="0.8"/></svg>
<div class="t" style="left:203.87px;top:297.00px;font-size:7.0px;line-height:8.40px;color:#1c1c1c;transform:scale(0.797,1);">Diametro</div>
<div class="r" style="left:231.5px;top:296.7px;width:36.5px;height:9px;background:#e7e9ec;border:1px solid #cdd0d4;border-top-color:#c4c7cc;box-sizing:border-box"></div>
<div class="t" style="left:255.12px;top:297.70px;font-size:7.0px;line-height:8.40px;color:#1a1a1a;transform:scale(0.857,1);">0.00</div>
<div class="t" style="left:272.50px;top:297.40px;font-size:7.0px;line-height:8.40px;color:#1c1c1c;transform:scale(0.836,1);">[mm]</div>
<div class="t" style="left:312.23px;top:297.00px;font-size:7.0px;line-height:8.40px;color:#1c1c1c;transform:scale(0.780,1);">Spessore</div>
<div class="r" style="left:339.5px;top:296.7px;width:36.5px;height:9px;background:#e7e9ec;border:1px solid #cdd0d4;border-top-color:#c4c7cc;box-sizing:border-box"></div>
<div class="t" style="left:363.12px;top:297.70px;font-size:7.0px;line-height:8.40px;color:#1a1a1a;transform:scale(0.857,1);">0.00</div>
<div class="t" style="left:381.50px;top:297.40px;font-size:7.0px;line-height:8.40px;color:#1c1c1c;transform:scale(0.772,1);">[mm]</div>
<div class="t" style="left:188.66px;top:306.80px;font-size:7.0px;line-height:8.40px;color:#1c1c1c;transform:scale(0.797,1);">Resistenza allo</div>
<div class="t" style="left:194.25px;top:313.80px;font-size:7.0px;line-height:8.40px;color:#1c1c1c;transform:scale(0.797,1);">snervamento</div>
<div class="r" style="left:231.5px;top:310.5px;width:36.5px;height:9px;background:#e7e9ec;border:1px solid #cdd0d4;border-top-color:#c4c7cc;box-sizing:border-box"></div>
<div class="t" style="left:255.12px;top:311.50px;font-size:7.0px;line-height:8.40px;color:#1a1a1a;transform:scale(0.857,1);">0.00</div>
<div class="t" style="left:273.00px;top:311.20px;font-size:7.0px;line-height:8.40px;color:#1c1c1c;transform:scale(0.824,1);">[N/mm²]</div>
<div class="r" style="left:407px;top:266.7px;width:225px;height:58.5px;background:#e8eaee;border:1px solid #d2d5da;box-sizing:border-box"></div>
<div class="r" style="left:408px;top:267.7px;width:223px;height:10px;background:linear-gradient(#e2e4e8,#d8dbe0)"></div>
<div class="t" style="left:413.00px;top:269.00px;font-size:7.0px;line-height:8.40px;color:#3c3c3c;transform:scale(0.826,1);">Parapetto - Caratteristiche dei tubi in acciaio</div>
<div class="t" style="left:433.84px;top:283.20px;font-size:7.0px;line-height:8.40px;color:#1c1c1c;transform:scale(0.797,1);">Sezione</div>
<div class="r" style="left:459px;top:282.0px;width:145px;height:10.2px;background:#e7e9ec;border:1px solid #cdd0d4;box-sizing:border-box"></div>
<svg class="r" style="left:608px;top:284.2px" width="10" height="10" viewBox="0 0 10 10"><path d="M2.5 1 H6.5 L9 3.5 V9 H3" fill="#fff" stroke="#7a7a7a" stroke-width="0.8"/><path d="M0.5 3.5 L4.5 5.5 L0.5 7.5 Z" fill="#34446e"/><path d="M6 5 Q6 8 4 8" fill="none" stroke="#34446e" stroke-width="0.8"/></svg>
<div class="t" style="left:431.37px;top:297.00px;font-size:7.0px;line-height:8.40px;color:#1c1c1c;transform:scale(0.797,1);">Diametro</div>
<div class="r" style="left:459px;top:296.7px;width:36.5px;height:9px;background:#e7e9ec;border:1px solid #cdd0d4;border-top-color:#c4c7cc;box-sizing:border-box"></div>
<div class="t" style="left:482.62px;top:297.70px;font-size:7.0px;line-height:8.40px;color:#1a1a1a;transform:scale(0.857,1);">0.00</div>
<div class="t" style="left:500.00px;top:297.40px;font-size:7.0px;line-height:8.40px;color:#1c1c1c;transform:scale(0.836,1);">[mm]</div>
<div class="t" style="left:539.73px;top:297.00px;font-size:7.0px;line-height:8.40px;color:#1c1c1c;transform:scale(0.780,1);">Spessore</div>
<div class="r" style="left:567px;top:296.7px;width:36.5px;height:9px;background:#e7e9ec;border:1px solid #cdd0d4;border-top-color:#c4c7cc;box-sizing:border-box"></div>
<div class="t" style="left:590.62px;top:297.70px;font-size:7.0px;line-height:8.40px;color:#1a1a1a;transform:scale(0.857,1);">0.00</div>
<div class="t" style="left:609.00px;top:297.40px;font-size:7.0px;line-height:8.40px;color:#1c1c1c;transform:scale(0.772,1);">[mm]</div>
<div class="t" style="left:416.16px;top:306.80px;font-size:7.0px;line-height:8.40px;color:#1c1c1c;transform:scale(0.797,1);">Resistenza allo</div>
<div class="t" style="left:421.75px;top:313.80px;font-size:7.0px;line-height:8.40px;color:#1c1c1c;transform:scale(0.797,1);">snervamento</div>
<div class="r" style="left:459px;top:310.5px;width:36.5px;height:9px;background:#e7e9ec;border:1px solid #cdd0d4;border-top-color:#c4c7cc;box-sizing:border-box"></div>
<div class="t" style="left:482.62px;top:311.50px;font-size:7.0px;line-height:8.40px;color:#1a1a1a;transform:scale(0.857,1);">0.00</div>
<div class="t" style="left:500.50px;top:311.20px;font-size:7.0px;line-height:8.40px;color:#1c1c1c;transform:scale(0.824,1);">[N/mm²]</div>
<div class="r" style="left:179.5px;top:329.3px;width:226px;height:58.5px;background:#e8eaee;border:1px solid #d2d5da;box-sizing:border-box"></div>
<div class="r" style="left:180.5px;top:330.3px;width:224px;height:10px;background:linear-gradient(#e2e4e8,#d8dbe0)"></div>
<div class="t" style="left:185.50px;top:331.60px;font-size:7.0px;line-height:8.40px;color:#3c3c3c;transform:scale(0.815,1);">Diagonali - Caratteristiche dei tubi in acciaio</div>
<div class="t" style="left:206.34px;top:345.80px;font-size:7.0px;line-height:8.40px;color:#1c1c1c;transform:scale(0.797,1);">Sezione</div>
<div class="r" style="left:231.5px;top:344.6px;width:145px;height:10.2px;background:#e7e9ec;border:1px solid #cdd0d4;box-sizing:border-box"></div>
<svg class="r" style="left:380.5px;top:346.8px" width="10" height="10" viewBox="0 0 10 10"><path d="M2.5 1 H6.5 L9 3.5 V9 H3" fill="#fff" stroke="#7a7a7a" stroke-width="0.8"/><path d="M0.5 3.5 L4.5 5.5 L0.5 7.5 Z" fill="#34446e"/><path d="M6 5 Q6 8 4 8" fill="none" stroke="#34446e" stroke-width="0.8"/></svg>
<div class="t" style="left:203.87px;top:359.60px;font-size:7.0px;line-height:8.40px;color:#1c1c1c;transform:scale(0.797,1);">Diametro</div>
<div class="r" style="left:231.5px;top:359.3px;width:36.5px;height:9px;background:#e7e9ec;border:1px solid #cdd0d4;border-top-color:#c4c7cc;box-sizing:border-box"></div>
<div class="t" style="left:255.12px;top:360.30px;font-size:7.0px;line-height:8.40px;color:#1a1a1a;transform:scale(0.857,1);">0.00</div>
<div class="t" style="left:272.50px;top:360.00px;font-size:7.0px;line-height:8.40px;color:#1c1c1c;transform:scale(0.836,1);">[mm]</div>
<div class="t" style="left:312.23px;top:359.60px;font-size:7.0px;line-height:8.40px;color:#1c1c1c;transform:scale(0.780,1);">Spessore</div>
<div class="r" style="left:339.5px;top:359.3px;width:36.5px;height:9px;background:#e7e9ec;border:1px solid #cdd0d4;border-top-color:#c4c7cc;box-sizing:border-box"></div>
<div class="t" style="left:363.12px;top:360.30px;font-size:7.0px;line-height:8.40px;color:#1a1a1a;transform:scale(0.857,1);">0.00</div>
<div class="t" style="left:381.50px;top:360.00px;font-size:7.0px;line-height:8.40px;color:#1c1c1c;transform:scale(0.772,1);">[mm]</div>
<div class="t" style="left:188.66px;top:369.40px;font-size:7.0px;line-height:8.40px;color:#1c1c1c;transform:scale(0.797,1);">Resistenza allo</div>
<div class="t" style="left:194.25px;top:376.40px;font-size:7.0px;line-height:8.40px;color:#1c1c1c;transform:scale(0.797,1);">snervamento</div>
<div class="r" style="left:231.5px;top:373.1px;width:36.5px;height:9px;background:#e7e9ec;border:1px solid #cdd0d4;border-top-color:#c4c7cc;box-sizing:border-box"></div>
<div class="t" style="left:255.12px;top:374.10px;font-size:7.0px;line-height:8.40px;color:#1a1a1a;transform:scale(0.857,1);">0.00</div>
<div class="t" style="left:273.00px;top:373.80px;font-size:7.0px;line-height:8.40px;color:#1c1c1c;transform:scale(0.824,1);">[N/mm²]</div>
<div class="r" style="left:179.5px;top:391.2px;width:226px;height:99px;background:#e8eaee;border:1px solid #d2d5da;box-sizing:border-box"></div>
<div class="r" style="left:180.5px;top:392.2px;width:224px;height:10px;background:linear-gradient(#e2e4e8,#d8dbe0)"></div>
<div class="t" style="left:185.50px;top:393.50px;font-size:7.0px;line-height:8.40px;color:#3c3c3c;transform:scale(0.832,1);">Caratteristiche dei giunti</div>
<div class="r" style="left:246.3px;top:407px;width:67px;height:9.6px;background:#fff;border:1px solid #d4d7db;box-sizing:border-box"></div>
<div class="r" style="left:305.5px;top:408px;width:7px;height:7.6px;background:linear-gradient(#f8f8f8,#e8e8e8);border-left:1px solid #e2e2e2;box-sizing:border-box"></div>
<svg class="r" style="left:307px;top:410.5px" width="4" height="3" viewBox="0 0 4 3"><path d="M0 0 H4 L2 2.5 Z" fill="#505050"/></svg>
<div class="t" style="left:247.40px;top:407.50px;font-size:7.0px;line-height:8.40px;color:#111;transform:scale(0.819,1);">Non presente</div>
<div class="t" style="left:199.60px;top:407.50px;font-size:7.0px;line-height:8.40px;color:#1c1c1c;transform:scale(0.814,1);">Giunto ortogonali</div>
<div class="r" style="left:246.3px;top:424px;width:67px;height:9.6px;background:#fff;border:1px solid #d4d7db;box-sizing:border-box"></div>
<div class="r" style="left:305.5px;top:425px;width:7px;height:7.6px;background:linear-gradient(#f8f8f8,#e8e8e8);border-left:1px solid #e2e2e2;box-sizing:border-box"></div>
<svg class="r" style="left:307px;top:427.5px" width="4" height="3" viewBox="0 0 4 3"><path d="M0 0 H4 L2 2.5 Z" fill="#505050"/></svg>
<div class="t" style="left:247.40px;top:424.50px;font-size:7.0px;line-height:8.40px;color:#111;transform:scale(0.771,1);">Classe A</div>
<div class="t" style="left:207.00px;top:424.50px;font-size:7.0px;line-height:8.40px;color:#1c1c1c;transform:scale(0.805,1);">Giunto girevoli</div>
<div class="r" style="left:246.3px;top:441px;width:67px;height:9.6px;background:#fff;border:1px solid #d4d7db;box-sizing:border-box"></div>
<div class="r" style="left:305.5px;top:442px;width:7px;height:7.6px;background:linear-gradient(#f8f8f8,#e8e8e8);border-left:1px solid #e2e2e2;box-sizing:border-box"></div>
<svg class="r" style="left:307px;top:444.5px" width="4" height="3" viewBox="0 0 4 3"><path d="M0 0 H4 L2 2.5 Z" fill="#505050"/></svg>
<div class="t" style="left:247.40px;top:441.50px;font-size:7.0px;line-height:8.40px;color:#111;transform:scale(0.771,1);">Classe A</div>
<div class="r" style="left:246.3px;top:457.7px;width:67px;height:9.6px;background:#fff;border:1px solid #d4d7db;box-sizing:border-box"></div>
<div class="r" style="left:305.5px;top:458.7px;width:7px;height:7.6px;background:linear-gradient(#f8f8f8,#e8e8e8);border-left:1px solid #e2e2e2;box-sizing:border-box"></div>
<svg class="r" style="left:307px;top:461.2px" width="4" height="3" viewBox="0 0 4 3"><path d="M0 0 H4 L2 2.5 Z" fill="#505050"/></svg>
<div class="t" style="left:247.40px;top:458.20px;font-size:7.0px;line-height:8.40px;color:#111;transform:scale(0.771,1);">Classe A</div>
<div class="t" style="left:204.00px;top:458.20px;font-size:7.0px;line-height:8.40px;color:#1c1c1c;transform:scale(0.795,1);">Giunto parallelo</div>
<div class="t" style="left:189.00px;top:437.70px;font-size:7.0px;line-height:8.40px;color:#1c1c1c;transform:scale(0.824,1);">Giunto a manicotto di</div>
<div class="t" style="left:207.60px;top:444.80px;font-size:7.0px;line-height:8.40px;color:#1c1c1c;transform:scale(0.875,1);">tipo ad attrito</div>
<div class="r" style="left:0px;top:537px;width:835px;height:13px;background:linear-gradient(#d6e3f1,#c6d7ea 50%,#b8cce4);border-top:1px solid #acb6c2;box-sizing:border-box"></div>
<svg class="r" style="left:652px;top:539.5px" width="9" height="9.5" viewBox="0 0 9 9.5"><rect x="0.5" y="0.5" width="8" height="8.5" fill="#6a5aa6" stroke="#4a3a86" stroke-width="0.6"/><rect x="2" y="1" width="5" height="3" fill="#e8e8f4"/><rect x="2.5" y="5.5" width="4" height="3" fill="#a8a0cc"/></svg>
<div class="t" style="left:671.00px;top:541.40px;font-size:7.0px;line-height:8.40px;color:#28323e;transform:scale(0.821,1);">Codice cliente: 017335</div>
<div class="r" style="left:738px;top:538px;width:1px;height:12px;background:#b9c6d5"></div>
<div class="t" style="left:759.00px;top:541.40px;font-size:7.0px;line-height:8.40px;color:#28323e;transform:scale(0.811,1);">lunedì 27 aprile 2015</div>
<div class="r" style="left:824px;top:538px;width:1px;height:12px;background:#b9c6d5"></div>
</div></body></html>
